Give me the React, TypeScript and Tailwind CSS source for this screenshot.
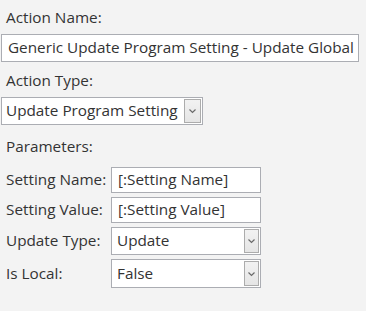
import React from "react";

function Chevron() {
  return (
    <svg width="9" height="6" viewBox="0 0 9 6" fill="none">
      <path d="M1.5 1.5 L4.5 4.5 L7.5 1.5" stroke="#6a6a6a" strokeWidth="1.2" />
    </svg>
  );
}

function DropBtn({ w, h }: { w: string; h: string }) {
  return (
    <div
      className={`${w} ${h} border border-[#acacac] bg-gradient-to-b from-[#f2f2f2] to-[#e5e5e5] flex items-center justify-center`}
    >
      <Chevron />
    </div>
  );
}

function TextBox({ value, cls }: { value: string; cls: string }) {
  return (
    <div className={`${cls} border border-[#abadb3] bg-white flex items-center pl-[6px] whitespace-nowrap overflow-hidden`}>
      {value}
    </div>
  );
}

function Row({ label, children }: { label: string; children: React.ReactNode }) {
  return (
    <div className="flex items-center">
      <div className="w-[111px] pl-[6px]">{label}</div>
      {children}
    </div>
  );
}

export default function App() {
  return (
    <div
      className="w-[366px] h-[311px] bg-[#f3f3f3] text-[#333333] text-[15.3px] leading-none"
      style={{ fontFamily: '"Open Sans", "Noto Sans", sans-serif' }}
    >
      <div className="h-[34px] flex items-center pl-[6px] pt-[1px]">Action Name:</div>
      <div className="pl-[1px]">
        <TextBox value="Generic Update Program Setting - Update Global" cls="w-[358px] h-[28px]" />
      </div>
      <div className="h-[35px] flex items-center pl-[6px] pt-[2px]">Action Type:</div>
      <div className="pl-[1px]">
        <div className="w-[202px] h-[28px] border border-[#abadb3] bg-white flex items-center justify-between pl-[4px] pr-[1px]">
          <span>Update Program Setting</span>
          <DropBtn w="w-[17px]" h="h-[24px]" />
        </div>
      </div>
      <div className="h-[42px] flex items-center pl-[6px] pt-[2px]">Parameters:</div>
      <div className="flex flex-col gap-[4px]">
        <Row label="Setting Name:">
          <TextBox value="[:Setting Name]" cls="w-[150px] h-[26px]" />
        </Row>
        <Row label="Setting Value:">
          <TextBox value="[:Setting Value]" cls="w-[150px] h-[26px]" />
        </Row>
        <Row label="Update Type:">
          <div className="w-[150px] h-[28px] border border-[#abadb3] bg-white flex items-center justify-between pl-[5px] pr-[1px]">
            <span>Update</span>
            <DropBtn w="w-[15px]" h="h-[24px]" />
          </div>
        </Row>
        <Row label="Is Local:">
          <div className="w-[150px] h-[29px] border border-[#abadb3] bg-white flex items-center justify-between pl-[5px] pr-[1px]">
            <span>False</span>
            <DropBtn w="w-[15px]" h="h-[25px]" />
          </div>
        </Row>
      </div>
    </div>
  );
}
